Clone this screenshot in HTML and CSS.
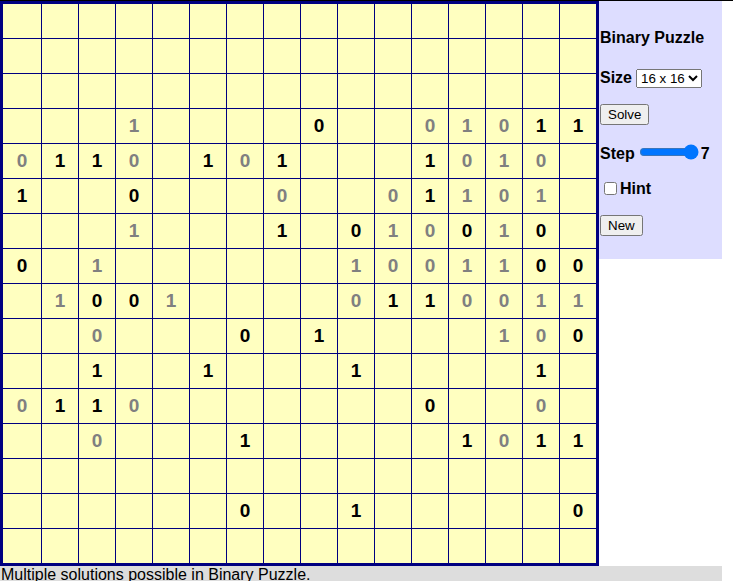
FILE: index.html
```html
<!DOCTYPE html>
<html>
<head>
<meta charset="utf-8">
<title>Binary Puzzle</title>
<link rel="stylesheet" href="styles.css">
</head>
<body>
<div class="page">
  <div class="board">
    <span></span><span></span><span></span><span></span><span></span><span></span><span></span><span></span><span></span><span></span><span></span><span></span><span></span><span></span><span></span><span></span>
    <span></span><span></span><span></span><span></span><span></span><span></span><span></span><span></span><span></span><span></span><span></span><span></span><span></span><span></span><span></span><span></span>
    <span></span><span></span><span></span><span></span><span></span><span></span><span></span><span></span><span></span><span></span><span></span><span></span><span></span><span></span><span></span><span></span>
    <span></span><span></span><span></span><span class="s">1</span><span></span><span></span><span></span><span></span><span class="g">0</span><span></span><span></span><span class="s">0</span><span class="s">1</span><span class="s">0</span><span class="g">1</span><span class="g">1</span>
    <span class="s">0</span><span class="g">1</span><span class="g">1</span><span class="s">0</span><span></span><span class="g">1</span><span class="s">0</span><span class="g">1</span><span></span><span></span><span></span><span class="g">1</span><span class="s">0</span><span class="s">1</span><span class="s">0</span><span></span>
    <span class="g">1</span><span></span><span></span><span class="g">0</span><span></span><span></span><span></span><span class="s">0</span><span></span><span></span><span class="s">0</span><span class="g">1</span><span class="s">1</span><span class="s">0</span><span class="s">1</span><span></span>
    <span></span><span></span><span></span><span class="s">1</span><span></span><span></span><span></span><span class="g">1</span><span></span><span class="g">0</span><span class="s">1</span><span class="s">0</span><span class="g">0</span><span class="s">1</span><span class="g">0</span><span></span>
    <span class="g">0</span><span></span><span class="s">1</span><span></span><span></span><span></span><span></span><span></span><span></span><span class="s">1</span><span class="s">0</span><span class="s">0</span><span class="s">1</span><span class="s">1</span><span class="g">0</span><span class="g">0</span>
    <span></span><span class="s">1</span><span class="g">0</span><span class="g">0</span><span class="s">1</span><span></span><span></span><span></span><span></span><span class="s">0</span><span class="g">1</span><span class="g">1</span><span class="s">0</span><span class="s">0</span><span class="s">1</span><span class="s">1</span>
    <span></span><span></span><span class="s">0</span><span></span><span></span><span></span><span class="g">0</span><span></span><span class="g">1</span><span></span><span></span><span></span><span></span><span class="s">1</span><span class="s">0</span><span class="g">0</span>
    <span></span><span></span><span class="g">1</span><span></span><span></span><span class="g">1</span><span></span><span></span><span></span><span class="g">1</span><span></span><span></span><span></span><span></span><span class="g">1</span><span></span>
    <span class="s">0</span><span class="g">1</span><span class="g">1</span><span class="s">0</span><span></span><span></span><span></span><span></span><span></span><span></span><span></span><span class="g">0</span><span></span><span></span><span class="s">0</span><span></span>
    <span></span><span></span><span class="s">0</span><span></span><span></span><span></span><span class="g">1</span><span></span><span></span><span></span><span></span><span></span><span class="g">1</span><span class="s">0</span><span class="g">1</span><span class="g">1</span>
    <span></span><span></span><span></span><span></span><span></span><span></span><span></span><span></span><span></span><span></span><span></span><span></span><span></span><span></span><span></span><span></span>
    <span></span><span></span><span></span><span></span><span></span><span></span><span class="g">0</span><span></span><span></span><span class="g">1</span><span></span><span></span><span></span><span></span><span></span><span class="g">0</span>
    <span></span><span></span><span></span><span></span><span></span><span></span><span></span><span></span><span></span><span></span><span></span><span></span><span></span><span></span><span></span><span></span>
  </div>
  <div class="side">
    <div class="title">Binary Puzzle</div>
    <label class="row size">Size <select class="ctl"><option>16 x 16</option></select></label>
    <button class="ctl solve">Solve</button>
    <label class="row step">Step <input class="slider" type="range" min="1" max="7" value="7"><span class="val">7</span></label>
    <label class="row hint"><input class="check" type="checkbox">Hint</label>
    <button class="ctl new">New</button>
  </div>
  <div class="status">Multiple solutions possible in Binary Puzzle.</div>
</div>
</body>
</html>
```

FILE: styles.css
```css
html, body {
  background: #fff;
}
body {
  margin: 0;
  border-top: 1px solid #000;
  font-family: "Liberation Sans", Arial, sans-serif;
  font-size: 16px;
  color: #000;
}
.page {
  display: grid;
  grid-template-columns: 599px 123px;
  width: 722px;
  align-items: start;
}
.board {
  display: grid;
  grid-template-columns: 38px repeat(15, 36px);
  grid-auto-rows: 34px;
  gap: 1px;
  background: #000080;
  border: 3px solid #000080;
}
.board span {
  background: #ffffc0;
  display: flex;
  align-items: center;
  justify-content: center;
  font-weight: bold;
  font-size: 19px;
}
.board .g { color: #000; }
.board .s { color: #808080; }

.side {
  background: #ddddff;
  padding: 0 0 23px 1px;
  display: flex;
  flex-direction: column;
  align-items: flex-start;
  font-weight: bold;
  line-height: 18px;
}
.title {
  margin-top: 28px;
}
.row {
  display: flex;
}
.size {
  margin-top: 22px;
  align-items: baseline;
  gap: 4px;
}
.ctl {
  font-family: "Liberation Sans", Arial, sans-serif;
  font-size: 13.333px;
  margin: 0;
}
.solve {
  margin-top: 16px;
}
.step {
  margin-top: 19px;
  align-items: center;
  gap: 4px;
}
.slider {
  width: 60px;
  margin: 0 0 4px 0;
}
.val {
  margin-left: -2px;
}
.hint {
  margin-top: 15px;
  align-items: center;
}
.check {
  margin: 3px 3px 3px 4px;
}
.new {
  margin-top: 17px;
}
.status {
  grid-column: 1 / -1;
  background: #dddddd;
  padding-left: 1px;
  line-height: 18px;
}
```
